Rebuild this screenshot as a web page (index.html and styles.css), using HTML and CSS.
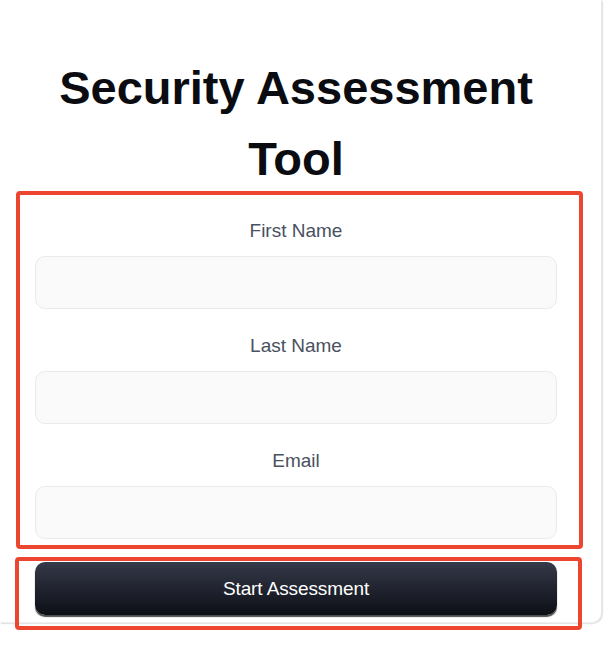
FILE: index.html
```html
<!DOCTYPE html>
<html lang="en">
<head>
<meta charset="utf-8">
<title>Security Assessment Tool</title>
<link rel="stylesheet" href="styles.css">
</head>
<body>
<main class="card">
  <h1 class="title">Security Assessment Tool</h1>
  <form class="form">
    <div class="fields">
      <div class="field">
        <label class="label" for="first">First Name</label>
        <input class="input" id="first" type="text">
      </div>
      <div class="field">
        <label class="label" for="last">Last Name</label>
        <input class="input" id="last" type="text">
      </div>
      <div class="field">
        <label class="label" for="email">Email</label>
        <input class="input" id="email" type="email">
      </div>
    </div>
    <div class="actions">
      <button class="btn" type="button">Start Assessment</button>
    </div>
  </form>
</main>
</body>
</html>
```

FILE: styles.css
```css
html, body {
  margin: 0;
  padding: 0;
  background: #ffffff;
}

body {
  font-family: "Liberation Sans", Arial, sans-serif;
  color: #0b0d13;
  width: 612px;
  height: 646px;
  overflow: hidden;
}

.card {
  box-sizing: border-box;
  width: 602px;
  background: #ffffff;
  border-right: 1px solid #e8e8ea;
  border-bottom: 1px solid #efeff1;
  border-bottom-right-radius: 10px;
  padding: 52px 44px 7px 35px;
  box-shadow: 1px 1px 1px rgba(0, 0, 0, 0.12);
}

.title {
  margin: 0;
  font-size: 47px;
  line-height: 71px;
  font-weight: 700;
  text-align: center;
  color: #0a0c12;
}

.form {
  margin-top: 23px;
}

.fields,
.actions {
  position: relative;
}

.fields::after {
  content: "";
  position: absolute;
  left: -19px;
  right: -26px;
  top: -26px;
  bottom: -10px;
  border: 4px solid #ec4630;
  border-radius: 4px;
  pointer-events: none;
}

.actions::after {
  content: "";
  position: absolute;
  left: -20px;
  right: -25px;
  top: -5px;
  bottom: -15px;
  border: 4px solid #ec4630;
  border-radius: 4px;
  pointer-events: none;
}

.field {
  display: flex;
  flex-direction: column;
  margin-bottom: 23px;
}

.label {
  display: block;
  text-align: center;
  font-size: 19px;
  line-height: 28px;
  color: #4a5161;
  margin-bottom: 11px;
}

.input {
  box-sizing: border-box;
  width: 100%;
  height: 53px;
  margin: 0;
  border: 1px solid #e9eaee;
  border-radius: 10px;
  background: #fafafa;
  font: inherit;
}

.btn {
  display: block;
  box-sizing: border-box;
  width: 100%;
  height: 53px;
  margin: 0;
  border: 0;
  border-radius: 10px;
  background: linear-gradient(#353949, #0d0f16);
  box-shadow: 0 2px 1px rgba(0, 0, 0, 0.7);
  color: #ffffff;
  font-family: "Liberation Sans", Arial, sans-serif;
  font-size: 19px;
  letter-spacing: -0.1px;
}
```
